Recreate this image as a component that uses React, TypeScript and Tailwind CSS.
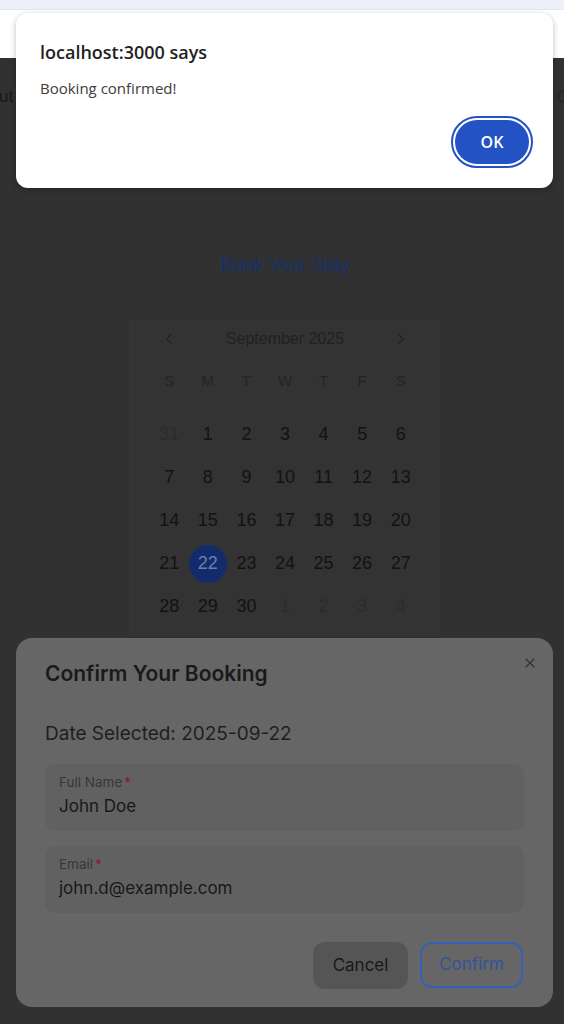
import { ChevronLeft, ChevronRight, X, Search } from "lucide-react";

const weekDays = ["S", "M", "T", "W", "T", "F", "S"];

// September 2025, padded with neighbouring month days
const days: { n: number; muted?: boolean }[] = [
  { n: 31, muted: true },
  ...Array.from({ length: 30 }, (_, i) => ({ n: i + 1 })),
  { n: 1, muted: true },
  { n: 2, muted: true },
  { n: 3, muted: true },
  { n: 4, muted: true },
];

function Calendar() {
  return (
    <div className="mt-[41px] ml-[130px] w-[310px] border border-dotted border-[#393939] bg-[#333333] px-[19px] pb-[6px] font-['Liberation_Sans',Arial,sans-serif]">
      <div className="grid h-[36px] grid-cols-7 items-center">
        <div className="flex justify-center">
          <ChevronLeft className="h-[18px] w-[18px] text-[#242424]" strokeWidth={1.5} />
        </div>
        <div className="col-span-5 text-center text-[16px] text-[#212121]">September 2025</div>
        <div className="flex justify-center">
          <ChevronRight className="h-[18px] w-[18px] text-[#242424]" strokeWidth={1.5} />
        </div>
      </div>
      <div className="mt-[8px] grid h-[32px] grid-cols-7 items-center text-center text-[15px] text-[#242424]">
        {weekDays.map((d, i) => (
          <span key={i}>{d}</span>
        ))}
      </div>
      <div className="mt-[16px] grid grid-cols-7 text-[18px]">
        {days.map((d, i) => {
          const selected = !d.muted && d.n === 22;
          return (
            <div key={i} className="flex h-[43px] items-center justify-center">
              {selected ? (
                <span className="flex h-[38px] w-[38px] items-center justify-center rounded-full bg-[#102c6c] text-[#6d7fa6]">
                  {d.n}
                </span>
              ) : (
                <span className={d.muted ? "text-[#2c2c2c]" : "text-[#121212]"}>{d.n}</span>
              )}
            </div>
          );
        })}
      </div>
    </div>
  );
}

function Field({ label, value }: { label: string; value: string }) {
  return (
    <div className="h-[67px] rounded-[10px] bg-[#616161] px-[14px] pt-[10px]">
      <div className="flex h-[16px] items-center text-[13.5px] text-[#373737]">
        {label}
        <span className="ml-[2px] text-[#86163a]">*</span>
      </div>
      <div className="mt-[4px] h-[24px] text-[17px] leading-[24px] text-[#181818]">{value}</div>
    </div>
  );
}

function BookingModal() {
  return (
    <div className="absolute top-[638px] left-[16px] h-[369px] w-[537px] rounded-[16px] bg-[#666666] px-[29px] pt-[22px] font-['Inter',sans-serif]">
      <X className="absolute top-[17px] right-[15px] h-[16px] w-[16px] text-[#303030]" strokeWidth={1.6} />
      <h2 className="text-[21px] leading-[28px] font-semibold text-[#1a1a1a]">Confirm Your Booking</h2>
      <p className="mt-[32px] text-[19px] leading-[28px] text-[#1f1f1f]">Date Selected: 2025-09-22</p>
      <div className="mt-[16px] flex flex-col gap-[15px]">
        <Field label="Full Name" value="John Doe" />
        <Field label="Email" value="john.d@example.com" />
      </div>
      <div className="mt-[29px] flex justify-end gap-[12px] pr-[1px]">
        <button className="h-[47px] w-[95px] rounded-[12px] bg-[#555555] text-[17px] text-[#181818]">Cancel</button>
        <button className="h-[46px] w-[103px] rounded-[12px] border-2 border-[#3760b4] text-[17px] text-[#34539a]">
          Confirm
        </button>
      </div>
    </div>
  );
}

function AlertBox() {
  return (
    <div className="absolute top-[13px] left-[16px] h-[175px] w-[537px] rounded-[12px] bg-white pl-[24px] pr-[20px] pt-[26px] font-['Open_Sans',sans-serif] shadow-[0_2px_6px_rgba(0,0,0,0.25)]">
      <div className="text-[18px] leading-[26px] font-semibold text-[#1f1f1f]">localhost:3000 says</div>
      <div className="mt-[12px] text-[15px] leading-[22px] text-[#3c3c3c]">Booking confirmed!</div>
      <div className="mt-[21px] flex justify-end">
        <button className="mr-[4px] h-[44px] w-[74px] rounded-full bg-[#2352c4] text-[16px] font-semibold text-white outline-2 outline-offset-2 outline-[#2352c4]">
          OK
        </button>
      </div>
    </div>
  );
}

export default function App() {
  return (
    <div className="relative flex h-[1024px] w-[564px] flex-col overflow-hidden">
      <div className="h-[10px] border-b border-[#e4e6f0] bg-[#eef0f9]" />
      <div className="h-[48px] bg-white" />
      <main className="flex flex-1 flex-col bg-[#313131]">
        <header className="flex h-[78px] items-center justify-between font-['Liberation_Sans',Arial,sans-serif]">
          <span className="-ml-[1px] text-[17px] text-[#181818]">ut</span>
          <Search className="-mr-[10px] h-[18px] w-[18px] text-[#242424]" strokeWidth={1.5} />
        </header>
        <h1 className="mt-[115px] pl-[6px] text-center font-['Liberation_Sans',Arial,sans-serif] text-[19px] leading-[28px] text-[#16306e]">
          Book Your Stay
        </h1>
        <Calendar />
      </main>
      <BookingModal />
      <AlertBox />
    </div>
  );
}
